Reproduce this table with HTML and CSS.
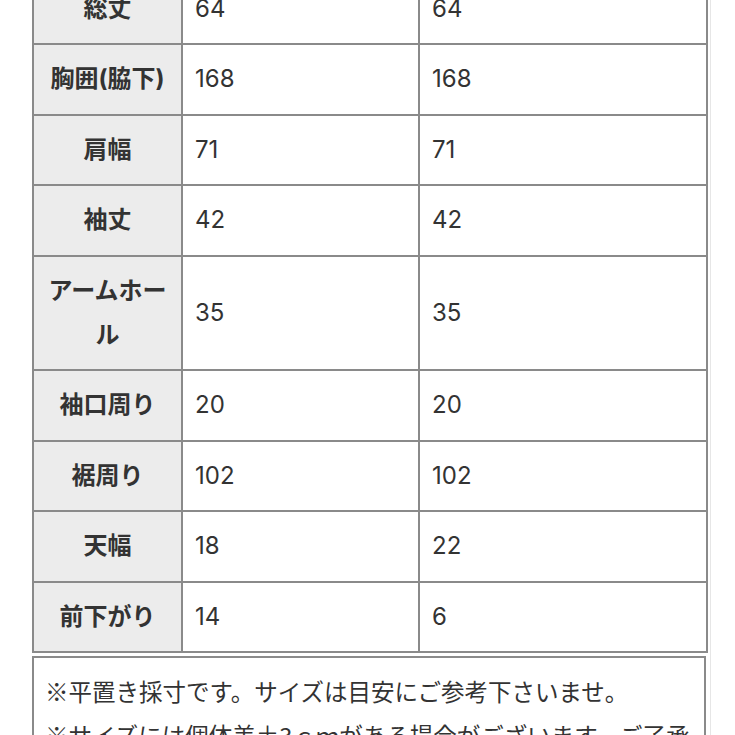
FILE: index.html
```html
<!DOCTYPE html>
<html lang="ja">
<head>
<meta charset="utf-8">
<link rel="stylesheet" href="styles.css">
</head>
<body>
<div class="page">
  <table class="size-table">
    <colgroup>
      <col class="c-label">
      <col class="c-a">
      <col class="c-b">
    </colgroup>
    <tbody>
      <tr><th>総丈</th><td>64</td><td>64</td></tr>
      <tr><th>胸囲(脇下)</th><td>168</td><td>168</td></tr>
      <tr><th>肩幅</th><td>71</td><td>71</td></tr>
      <tr><th>袖丈</th><td>42</td><td>42</td></tr>
      <tr><th>アームホール</th><td>35</td><td>35</td></tr>
      <tr><th>袖口周り</th><td>20</td><td>20</td></tr>
      <tr><th>裾周り</th><td>102</td><td>102</td></tr>
      <tr><th>天幅</th><td>18</td><td>22</td></tr>
      <tr><th>前下がり</th><td>14</td><td>6</td></tr>
    </tbody>
  </table>
  <div class="note">
    <p>※平置き採寸です。サイズは目安にご参考下さいませ。</p>
    <p>※サイズには個体差±3ｃｍがある場合がございます。ご了承ください。</p>
  </div>
</div>
</body>
</html>
```
FILE: styles.css
```css
html, body {
  margin: 0;
  padding: 0;
  background: #ffffff;
}
body {
  font-family: Inter, "Noto Sans CJK JP", sans-serif;
  color: #333333;
  font-size: 24px;
  overflow: hidden;
}
.page {
  width: 711px;
  min-height: 735px;
  border-right: 1px solid #e6e6e6;
  padding-left: 32px;
  box-sizing: border-box;
}
.size-table {
  margin-top: -27px;
  width: 674px;
  table-layout: fixed;
  border-collapse: collapse;
}
.c-label { width: 149px; }
.c-a { width: 237px; }
.c-b { width: 288px; }
.size-table th,
.size-table td {
  border: 2px solid #8a8a8a;
  padding: 12px 10px;
  line-height: 44.4px;
  vertical-align: middle;
}
.size-table th {
  background: #ececec;
  font-weight: 700;
  text-align: center;
}
.size-table td {
  text-align: left;
  padding-left: 12px;
  font-weight: 400;
}
.note {
  margin-top: 3px;
  width: 674px;
  box-sizing: border-box;
  border: 2px solid #8a8a8a;
  padding: 11px 10px 11px 11px;
  font-family: "Noto Sans CJK JP", sans-serif;
}
.note p {
  margin: 0;
  font-size: 23.5px;
  line-height: 44px;
}
```
